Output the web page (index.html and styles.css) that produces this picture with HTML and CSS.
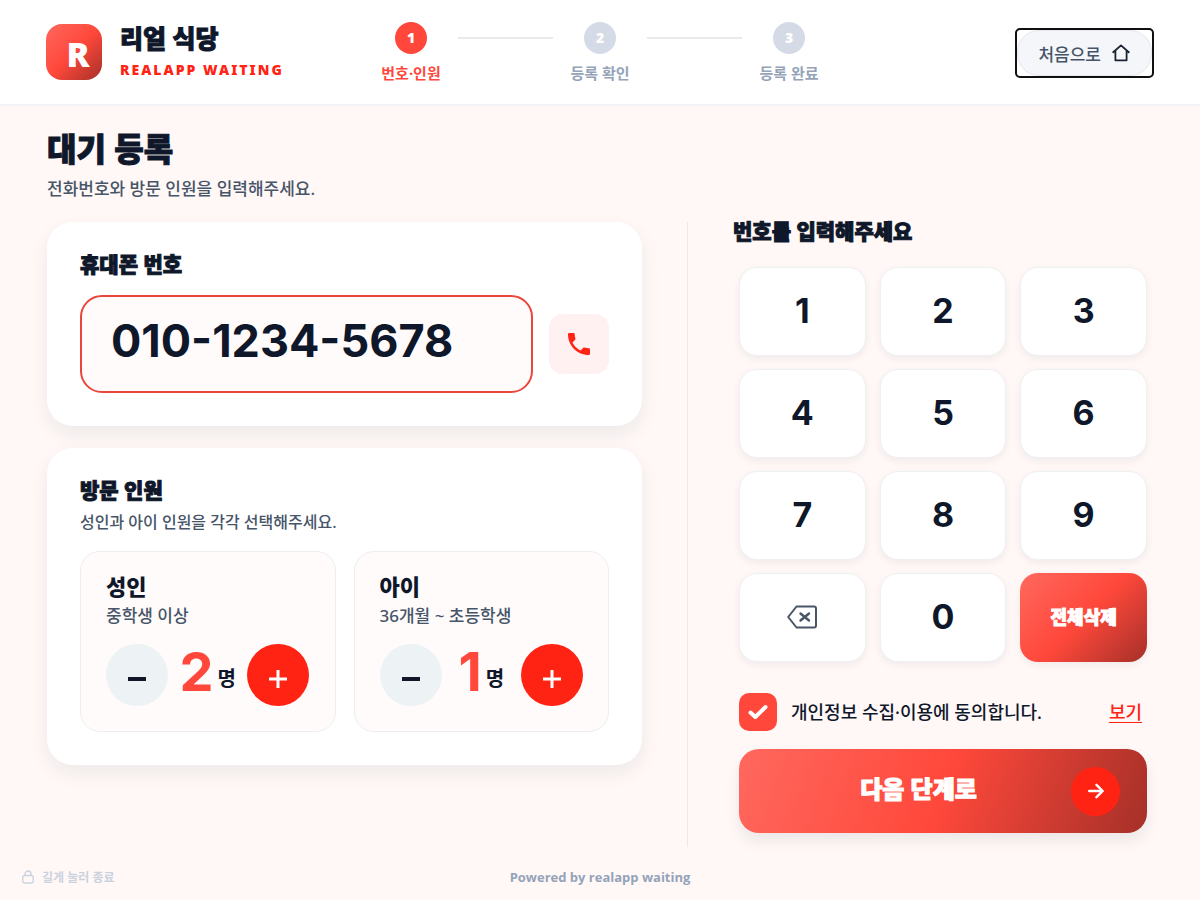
FILE: index.html
```html
<!DOCTYPE html>
<html lang="ko">
<head>
<meta charset="utf-8">
<meta name="viewport" content="width=device-width, initial-scale=1">
<title>리얼 식당 대기 등록</title>
<link rel="stylesheet" href="styles.css">
</head>
<body>
<header class="header">
  <div class="brand">
    <div class="logo" aria-hidden="true">R</div>
    <div class="brand-text">
      <div class="brand-name">리얼 식당</div>
      <div class="brand-sub">REALAPP WAITING</div>
    </div>
  </div>
  <ol class="steps">
    <li class="step active"><span class="dot">1</span><span>번호·인원</span></li>
    <li class="line" aria-hidden="true"></li>
    <li class="step"><span class="dot">2</span><span>등록 확인</span></li>
    <li class="line" aria-hidden="true"></li>
    <li class="step"><span class="dot">3</span><span>등록 완료</span></li>
  </ol>
  <button class="home" type="button">
    <span class="home-pill">처음으로
      <svg width="18" height="18" viewBox="0 0 18 18" fill="none" stroke="#1b2333" stroke-width="1.8" stroke-linejoin="round" stroke-linecap="round"><path d="M1.2 8.2 9 1.4l7.800 6.800M3.400 6.600V16.300H14.600V6.600"/></svg>
    </span>
  </button>
</header>

<main class="main">
  <h1 class="title">대기 등록</h1>
  <p class="lead">전화번호와 방문 인원을 입력해주세요.</p>
  <div class="columns">
    <div class="left">
      <section class="card">
        <h2 class="heading"><label for="phone">휴대폰 번호</label></h2>
        <div class="phone-row">
          <input class="phone" id="phone" type="tel" value="010-1234-5678">
          <div class="phone-icon">
            <svg width="22" height="22" viewBox="3 3 18 18" fill="#ff2314"><path d="M6.620 10.790c1.440 2.830 3.760 5.140 6.590 6.590l2.200-2.200c.27-.27.67-.36 1.020-.24 1.120.37 2.330.57 3.570.57.550 0 1 .45 1 1V20c0 .55-.45 1-1 1-9.390 0-17-7.610-17-17 0-.55.45-1 1-1h3.500c.55 0 1 .45 1 1 0 1.250.2 2.450.57 3.570.110.350.030.740-.25 1.020l-2.200 2.200z"/></svg>
          </div>
        </div>
      </section>
      <section class="card">
        <h2 class="heading">방문 인원</h2>
        <p class="note">성인과 아이 인원을 각각 선택해주세요.</p>
        <div class="people">
          <div class="person">
            <h3 class="person-name">성인</h3>
            <p class="person-note">중학생 이상</p>
            <div class="stepper">
              <button class="round minus" type="button" aria-label="성인 줄이기"><svg width="18" height="18" viewBox="0 0 18 18"><path d="M0 9H18" stroke="#111629" stroke-width="4"/></svg></button>
              <div class="count"><span class="num">2</span><span class="unit">명</span></div>
              <button class="round plus" type="button" aria-label="성인 늘리기"><svg width="18" height="18" viewBox="0 0 18 18"><path d="M0 9H18M9 0V18" stroke="#fff" stroke-width="3"/></svg></button>
            </div>
          </div>
          <div class="person">
            <h3 class="person-name">아이</h3>
            <p class="person-note">36개월 ~ 초등학생</p>
            <div class="stepper">
              <button class="round minus" type="button" aria-label="아이 줄이기"><svg width="18" height="18" viewBox="0 0 18 18"><path d="M0 9H18" stroke="#111629" stroke-width="4"/></svg></button>
              <div class="count"><span class="num">1</span><span class="unit">명</span></div>
              <button class="round plus" type="button" aria-label="아이 늘리기"><svg width="18" height="18" viewBox="0 0 18 18"><path d="M0 9H18M9 0V18" stroke="#fff" stroke-width="3"/></svg></button>
            </div>
          </div>
        </div>
      </section>
    </div>
    <section class="right">
      <h2 class="heading">번호를 입력해주세요</h2>
      <div class="panel">
        <div class="keypad">
          <button class="key" type="button">1</button>
          <button class="key" type="button">2</button>
          <button class="key" type="button">3</button>
          <button class="key" type="button">4</button>
          <button class="key" type="button">5</button>
          <button class="key" type="button">6</button>
          <button class="key" type="button">7</button>
          <button class="key" type="button">8</button>
          <button class="key" type="button">9</button>
          <button class="key" type="button" aria-label="지우기"><svg width="30" height="24" viewBox="0 0 30 24" fill="none" stroke="#485468" stroke-width="2" stroke-linejoin="round"><path d="M9.500 1.500H27Q29 1.500 29 3.500V20.500Q29 22.500 27 22.500H9.500L1.200 12Z"/><path d="M13.500 8.500 22 15.500M22 8.500 13.500 15.500" stroke-width="2.400" stroke-linecap="round"/></svg></button>
          <button class="key" type="button">0</button>
          <button class="key clear" type="button">전체삭제</button>
        </div>
        <div class="agree">
          <span class="check-wrap">
            <input class="check" id="agree" type="checkbox" checked>
            <svg class="tick" width="20" height="16" viewBox="0 0 20 16" fill="none" stroke="#fff" stroke-width="4" stroke-linecap="round" stroke-linejoin="round"><path d="M2.500 8.500 7.300 13 17.500 3"/></svg>
          </span>
          <label class="agree-label" for="agree">개인정보 수집·이용에 동의합니다.</label>
          <a class="view" href="#">보기</a>
        </div>
        <button class="next" type="button">
          <span class="next-text">다음 단계로</span>
          <span class="arrow"><svg width="16" height="16" viewBox="0 0 16 16" fill="none" stroke="#fff" stroke-width="2.400" stroke-linecap="round" stroke-linejoin="round"><path d="M1.200 8H14.500M8.500 1.800 14.700 8 8.500 14.200"/></svg></span>
        </button>
      </div>
    </section>
  </div>
</main>

<footer class="footer">
  <div class="exit">
    <svg width="12" height="14" viewBox="0 0 12 14" fill="none" stroke="#cbd2dd" stroke-width="1.300"><rect x=".8" y="5.500" width="10.400" height="7.500" rx="1.500"/><path d="M3 5.500V4a3 3 0 0 1 6 0V5.500"/></svg>
    길게 눌러 종료
  </div>
  <div class="powered">Powered by realapp waiting</div>
</footer>
</body>
</html>
```

FILE: styles.css
```css
* { box-sizing: border-box; }
body {
  margin: 0;
  min-height: 100vh;
  display: flex;
  flex-direction: column;
  background: #fff8f7;
  color: #0f172a;
  font-family: "Noto Sans", "Noto Sans CJK KR", sans-serif;
}
h1, h2, h3, p, ol { margin: 0; padding: 0; }
button, input { font-family: inherit; color: inherit; border: 0; padding: 0; }
button { cursor: pointer; }
svg { display: block; }

.header {
  display: grid;
  grid-template-columns: 1fr auto 1fr;
  align-items: center;
  height: 106px;
  padding: 2px 46px 0;
  background: #fff;
  border-bottom: 2px solid #f1f1f6;
}
.brand { display: flex; align-items: center; gap: 18px; padding-bottom: 2px; }
.logo {
  width: 56px;
  height: 56px;
  padding: 2px 0 0 8px;
  border-radius: 16px;
  background: linear-gradient(135deg, #ff685e, #ff483b 50%, #a53028);
  color: #fff;
  font: 900 34px/56px "Noto Sans", sans-serif;
  text-align: center;
}
.brand-text { display: grid; gap: 4px; padding-bottom: 2px; }
.brand-name { font-size: 25px; line-height: 34px; font-weight: 900; -webkit-text-stroke: 1px; }
.brand-sub { font-size: 14px; line-height: 22px; font-weight: 900; letter-spacing: 2px; color: #ff2314; }

.steps { display: flex; list-style: none; gap: 17px; }
.step {
  display: flex;
  flex-direction: column;
  align-items: center;
  gap: 8px;
  min-width: 60px;
  font-size: 15px;
  line-height: 22px;
  font-weight: 700;
  color: #94a3b8;
}
.dot {
  width: 32px;
  height: 32px;
  border-radius: 50%;
  background: #d5dbe6;
  color: #fff;
  font-size: 14px;
  line-height: 32px;
  font-weight: 900;
  text-align: center;
}
.active { color: #ff483b; }
.active .dot { background: #ff483b; }
.line { width: 95px; height: 2px; margin-top: 15px; background: #e8eaec; }

.home {
  justify-self: end;
  border: 2px solid #101010;
  border-radius: 5px;
  background: #fff;
}
.home-pill {
  display: flex;
  align-items: center;
  gap: 11px;
  height: 46px;
  padding: 0 21px 0 20px;
  border: 1px solid #e4e8ee;
  border-radius: 22px;
  background: #f4f6fa;
  font-size: 17px;
  font-weight: 500;
  color: #475569;
}

.main { flex: 1; padding: 21px 47px 0; }
.title { font-size: 32px; line-height: 44px; font-weight: 900; -webkit-text-stroke: 1px; }
.lead { margin-top: 6px; font-size: 17px; line-height: 24px; font-weight: 500; color: #475569; }
.columns { display: grid; grid-template-columns: minmax(0, 595fr) minmax(0, 511fr); margin-top: 21px; }
.left { display: flex; flex-direction: column; gap: 22px; margin-bottom: 82px; }
.card {
  padding: 28px 33px 33px;
  border-radius: 26px;
  background: #fff;
  box-shadow: 0 8px 20px rgba(15, 23, 42, .07);
}
.heading { font-size: 21px; line-height: 28px; font-weight: 900; -webkit-text-stroke: 1px; }
.phone-row { display: flex; align-items: center; gap: 16px; margin-top: 17px; }
.phone {
  flex: 1;
  min-width: 0;
  height: 98px;
  padding: 0 29px 8px;
  border: 2px solid #e9463c;
  border-radius: 22px;
  background: #fffbfb;
  font: 700 45px/60px Inter, sans-serif;
}
.phone-icon {
  display: grid;
  place-items: center;
  width: 60px;
  height: 60px;
  border-radius: 14px;
  background: #fff1f1;
}
.note { margin-top: 6px; font-size: 16px; line-height: 24px; font-weight: 500; color: #475569; }
.people { display: grid; grid-template-columns: 1fr 1fr; gap: 18px; margin-top: 17px; }
.person {
  padding: 20px 25px 25px;
  border: 1px solid #eceef1;
  border-radius: 20px;
  background: #fffbfb;
}
.person-name { font-size: 22px; line-height: 28px; font-weight: 900; }
.person-note { margin-top: 4px; font-size: 17px; line-height: 24px; font-weight: 500; color: #475569; }
.stepper { display: flex; align-items: center; justify-content: space-between; margin-top: 16px; }
.round {
  display: grid;
  place-items: center;
  width: 62px;
  height: 62px;
  padding-top: 8px;
  border-radius: 50%;
}
.minus { background: #edf2f5; }
.plus { background: #ff2314; }
.count { display: flex; align-items: center; gap: 4px; padding-bottom: 6px; }
.num { font: 700 54px/56px Inter, sans-serif; color: #ff483b; }
.unit { padding-top: 10px; font-size: 20px; font-weight: 700; }

.right { margin-left: 45px; padding-left: 45px; border-left: 1px solid #e9e9ec; }
.right .heading { margin-top: -5px; }
.panel { padding: 0 6px; }
.keypad {
  display: grid;
  grid-template-columns: repeat(3, 1fr);
  grid-auto-rows: 89px;
  gap: 13px 14px;
  margin-top: 22px;
}
.key {
  display: grid;
  place-items: center;
  padding-bottom: 2px;
  border: 1px solid #eff0f3;
  border-radius: 18px;
  background: #fff;
  font: 700 34px/40px Inter, sans-serif;
  box-shadow: 0 3px 8px rgba(15, 23, 42, .06);
}
.clear {
  border: 0;
  background: linear-gradient(135deg, #ff685e, #ff483b 50%, #a53028);
  color: #fff;
  font: 900 18px/24px "Noto Sans CJK KR", sans-serif;
  padding-bottom: 4px;
  -webkit-text-stroke: 1px;
}
.agree { display: flex; align-items: center; gap: 14px; margin-top: 31px; padding-right: 5px; }
.check-wrap { display: grid; place-items: center; }
.check, .tick { grid-area: 1 / 1; }
.check {
  appearance: none;
  width: 38px;
  height: 38px;
  margin: 0;
  border-radius: 10px;
  background: #fff;
}
.check:checked { background: #ff483b; }
.tick { pointer-events: none; z-index: 1; }
.agree-label { flex: 1; font-size: 18px; line-height: 26px; font-weight: 500; }
.view { color: #ff2314; font-size: 18px; line-height: 26px; font-weight: 500; text-underline-offset: 3px; }
.next {
  display: flex;
  align-items: center;
  width: 100%;
  height: 84px;
  margin-top: 18px;
  padding: 0 27px;
  border-radius: 20px;
  background: linear-gradient(110deg, #ff685e, #ff483b 50%, #a53028);
  color: #fff;
  box-shadow: 0 8px 16px rgba(15, 23, 42, .08);
}
.next-text { flex: 1; padding-bottom: 4px; font-size: 24px; line-height: 32px; font-weight: 900; -webkit-text-stroke: 1px; }
.arrow { display: grid; place-items: center; width: 49px; height: 49px; border-radius: 50%; background: #ff2314; }

.footer {
  display: grid;
  grid-template-columns: 1fr auto 1fr;
  align-items: center;
  height: 46px;
  padding: 0 22px;
}
.exit { display: flex; align-items: center; gap: 8px; font-size: 12px; font-weight: 700; color: #cbd2dd; }
.powered { font-family: "Open Sans", sans-serif; font-size: 13px; font-weight: 700; color: #94a3b8; }
```
